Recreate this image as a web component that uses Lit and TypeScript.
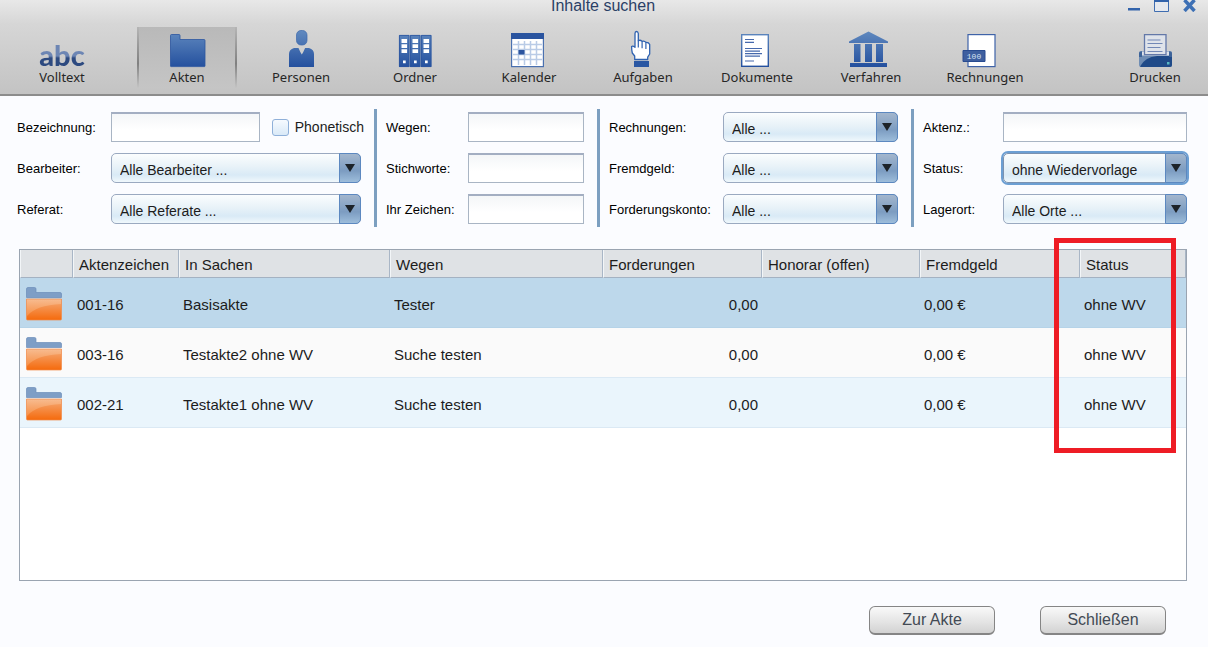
import { LitElement, html, css, svg } from "lit";
import { customElement } from "lit/decorators.js";
import { classMap } from "lit/directives/class-map.js";

const defs = svg`<defs>
  <linearGradient id="g" x1="0" y1="4" x2="0" y2="40" gradientUnits="userSpaceOnUse">
    <stop offset="0" stop-color="#6089bf"/><stop offset="1" stop-color="#24509e"/>
  </linearGradient>
</defs>`;

const icons: Record<string, unknown> = {
  Akten: svg`<path fill="url(#g)" stroke="#2c569f" stroke-width=".8" d="M3.5 8.5q0-1 1-1h7.500q1 0 1 1v4H37q1 0 1 1V39q0 .6-.6.6H4.100q-.6 0-.6-.6z"/>`,
  Personen: svg`<rect x="15.500" y="3.500" width="10.500" height="14.500" rx="4.500" fill="url(#g)" stroke="#3c68ac" stroke-width=".7"/>
    <path fill="url(#g)" d="M8 40V27q0-4.500 5-6h4.500l1.800 4 1.500 2.600 1.500-2.600 1.800-4H28q5 1.500 5 6v13z"/>`,
  Ordner: svg`${[4, 15, 26].map((x) => svg`<rect x=${x} y="8" width="10.400" height="32" fill="url(#g)"/>
    <path fill="none" stroke="#2c569f" stroke-width=".8" d="M${x + 0.4} 8.400h9.600v31.200h-9.600z"/>
    <path fill="#fff" d="M${x + 2.500} 12h5.600v4h-5.600zM${x + 2.500} 17.300h5.600v3.700h-5.600zM${x + 2.500} 22.300h5.600V26h-5.600zM${x + 4} 33.500h2.700v2.700h-2.700z"/>`)}`,
  Kalender: svg`<rect x="2.600" y="6.600" width="31.800" height="33" fill="#fff" stroke="#4a71b0" stroke-width="1.200"/>
    <path fill="#2a549f" d="M2 6h33v6H2z"/>
    <path stroke="#b9cbe6" stroke-width="1.500" d="M4 17.500h29M4 22.500h29M4 27.500h29M4 32.500h29M9.500 14v24M15.500 14v24M21.500 14v24M27.500 14v24"/>
    <path fill="#2a549f" d="M9.500 23h6v4.500h-6z"/>`,
  Aufgaben: svg`<path fill="#fff" stroke="#2f62b0" stroke-width="1.300" stroke-linejoin="round" d="M11.700 32.500V29L9.300 26q-.7-3.500-.7-6.500 1.200-1 3.400.8V6.500Q12 4.500 13.500 4.500T15.300 6.500v7.300q1.900-1.300 3.800.6 2.200-1 3.800 1 2.800-.2 3.800 2V27l-2 3.200v2.300z"/>
    <path stroke="#2f62b0" stroke-width="1.200" d="M15.300 13.500v7M19.100 14.400v6.800M22.900 15.400v6.500"/>
    <path fill="#2a57a3" d="M11 34h15v6H11z"/>`,
  Dokumente: svg`<rect x="4.700" y="7.700" width="26.600" height="31.600" fill="#fff" stroke="url(#g)" stroke-width="1.400"/>
    <path stroke="#4669ac" stroke-width="1.200" d="M8 12.500h9M8 15.300h9M8 21.500h17M8 24.200h15M8 26.700h17M8 29.200h15M8 34h9"/>`,
  Verfahren: svg`<path fill="url(#g)" d="M17.500 4.500 37 14.500V16H-2v-1.500zM3 17h6.500v18H3zM14 17h7v18h-7zM25 17h7v18h-7zM-1 36h37v4H-1z"/>`,
  Rechnungen: svg`<rect x="3" y="7.600" width="27" height="32" fill="#fff" stroke="#3f63a8" stroke-width="1.200"/>
    <path fill="#3e5f9f" stroke="#284b90" d="M-2 23.500h22v11H-2z"/>
    <text x="9" y="32" text-anchor="middle" font-family="Liberation Mono, monospace" font-size="8" fill="#d8e2f2">100</text>`,
  Drucken: svg`<path fill="#6f8db4" d="M4 26q0-2 2-2h29q2 0 2 2v12q0 2-2 2H6q-2 0-2-2z"/>
    <path fill="#dfe3ea" d="M7 24.500h27v4H7z"/>
    <path fill="#1f4a88" d="M5 39.500Q10 30 22 29H37v9q0 2-2 2H6z"/>
    <path fill="#3d6399" d="M34 24.500h1q2 0 2 2V30h-3zM4 26.500q0-2 2-2h1V30H4z"/>
    <path fill="#dfe3ea" stroke="#6378a8" stroke-width="1.300" d="M9.500 7.600h21.500v20H9.500z"/>
    <path stroke="#7288b6" stroke-width="1.200" d="M12.500 13h13M12.500 16.500h15M12.500 20.500h13M12.500 24.500h15"/>
    <path fill="#57b7c4" d="M32 35h2.500v2.500H32z"/>`,
};

const folder = html`<svg class="folder" viewBox="0 0 36 34" aria-hidden="true">
  <defs>
    <linearGradient id="o" x1="0" y1="0" x2="0" y2="1"><stop offset="0" stop-color="#f5ab78"/><stop offset="1" stop-color="#f56a0c"/></linearGradient>
    <linearGradient id="s" x1="0" y1="0" x2="0" y2="1"><stop offset="0" stop-color="#f9c49c"/><stop offset="1" stop-color="#f79a55"/></linearGradient>
  </defs>
  <path fill="#7e9ec6" stroke="#6b8db9" stroke-width=".7" d="M.5 2q0-1.500 1.500-1.500h6.500q1.500 0 1.500 1.500v3.500h24q1.500 0 1.500 1.500v3.500H.5z"/>
  <path fill="url(#o)" stroke="#f08a48" stroke-width=".7" d="M.5 12h35v20q0 1-1 1h-33q-1 0-1-1z"/>
  <path fill="url(#s)" opacity=".65" d="M1 12.500h34V17Q10 18 1 29z"/>
</svg>`;

type Field = { label: string; id: string; value?: string; check?: string; focus?: boolean };

const groups: Field[][] = [
  [
    { label: "Bezeichnung:", id: "bezeichnung", check: "Phonetisch" },
    { label: "Bearbeiter:", id: "bearbeiter", value: "Alle Bearbeiter ..." },
    { label: "Referat:", id: "referat", value: "Alle Referate ..." },
  ],
  [
    { label: "Wegen:", id: "wegen" },
    { label: "Stichworte:", id: "stichworte" },
    { label: "Ihr Zeichen:", id: "zeichen" },
  ],
  [
    { label: "Rechnungen:", id: "rechnungen", value: "Alle ..." },
    { label: "Fremdgeld:", id: "fremdgeld", value: "Alle ..." },
    { label: "Forderungskonto:", id: "forderungskonto", value: "Alle ..." },
  ],
  [
    { label: "Aktenz.:", id: "aktenz" },
    { label: "Status:", id: "status", value: "ohne Wiedervorlage", focus: true },
    { label: "Lagerort:", id: "lagerort", value: "Alle Orte ..." },
  ],
];

const columns = ["", "Aktenzeichen", "In Sachen", "Wegen", "Forderungen", "Honorar (offen)", "Fremdgeld", "Status"];
const rows = [
  ["001-16", "Basisakte", "Tester", "0,00", "", "0,00 €", "ohne WV"],
  ["003-16", "Testakte2 ohne WV", "Suche testen", "0,00", "", "0,00 €", "ohne WV"],
  ["002-21", "Testakte1 ohne WV", "Suche testen", "0,00", "", "0,00 €", "ohne WV"],
];

@customElement("app-root")
export class AppRoot extends LitElement {
  static styles = css`
    :host {
      display: flex;
      flex-direction: column;
      min-height: 100vh;
      box-sizing: border-box;
      background: #fbfcff;
      color: #1c1c1c;
      font-family: "Liberation Sans", Arial, sans-serif;
      font-size: 15px;
    }
    *, *::before, *::after { box-sizing: border-box; }
    button, input, select { font: inherit; color: inherit; margin: 0; }
    header {
      border-bottom: 2px solid #8c8c8c;
      background: linear-gradient(#e8e8e8, #d6d6d6 24px, #c3c3c3);
      padding-bottom: 6px;
    }
    .titlebar {
      display: grid;
      grid-template-columns: 1fr auto 1fr;
      padding: 0 10px 0 8px;
      height: 12px;
      margin-bottom: 15px;
    }
    h1 {
      grid-column: 2;
      margin: 0;
      font-size: 16px;
      line-height: 12px;
      font-weight: 400;
      color: #2b3f66;
    }
    .window { display: flex; justify-content: flex-end; gap: 12px; }
    .window button { border: 0; padding: 0; background: none; width: 16px; height: 12px; }
    .window svg { display: block; width: 16px; height: 12px; }
    .toolbar { display: flex; gap: 14px; padding: 0 3px 0 12px; }
    .tool {
      width: 100px;
      height: 61px;
      border: 0;
      padding: 0;
      background: none;
      display: flex;
      flex-direction: column;
      align-items: center;
      font-family: "Noto Sans", sans-serif;
      font-size: 13px;
      line-height: 20px;
      color: #262626;
    }
    .tool svg { width: 40px; height: 40px; overflow: visible; flex: none; }
    .tool.first { margin-right: 11px; }
    .tool.last { margin-left: auto; }
    .tool.active {
      background:
        linear-gradient(#b5b5b5, #808080 60%, #c4c4c4) left / 2px 100% no-repeat,
        linear-gradient(#b5b5b5, #808080 60%, #c4c4c4) right / 2px 100% no-repeat,
        linear-gradient(#b9b9b9, #c5c5c5);
    }
    .abc {
      height: 40px;
      font-family: Lato, sans-serif;
      font-weight: 900;
      font-size: 29px;
      line-height: 56px;
      background: linear-gradient(#6d86b4 29px, #2d4a80 31px);
      -webkit-background-clip: text;
      background-clip: text;
      color: transparent;
    }
    .filters {
      display: grid;
      grid-template-columns: 357fr 223fr 314fr 276fr;
      padding: 13px 21px 0 17px;
    }
    .group {
      display: grid;
      grid-template-columns: 82px minmax(0, 1fr);
      grid-auto-rows: 30px;
      row-gap: 11px;
      align-items: center;
      padding: 3px 13px 3px 9px;
      border-left: 3px solid #7c9fc0;
      font-size: 14px;
    }
    .group:nth-child(1) { grid-template-columns: 94px minmax(0, 1fr); padding-left: 0; border-left: 0; }
    .group:nth-child(3) { grid-template-columns: 114px minmax(0, 1fr); }
    .group:nth-child(4) { grid-template-columns: 80px minmax(0, 1fr); padding-right: 0; }
    .name { padding-top: 1px; font-size: 13px; white-space: nowrap; color: #000; }
    .text {
      width: 100%;
      height: 30px;
      border: 1px solid #a9b5c4;
      border-top: 2px solid #a3aec2;
      border-radius: 0;
      padding: 0 6px;
      background: linear-gradient(#f4f6f8, #fff 60%);
      outline: 0;
    }
    .with-check { display: flex; align-items: center; margin-right: -3px; }
    .with-check .text { flex: 1; min-width: 0; margin-right: 12px; }
    .with-check label { white-space: nowrap; }
    .check {
      appearance: none;
      flex: none;
      width: 17px;
      height: 17px;
      margin-right: 6px;
      border: 1px solid #8fb0d9;
      border-radius: 3px;
      background: linear-gradient(#f6faff, #d9e9f7);
    }
    .pick { position: relative; }
    .pick select {
      appearance: none;
      display: block;
      width: 100%;
      height: 30px;
      padding: 3px 26px 0 8px;
      border: 1px solid #9aa9c0;
      border-radius: 5px;
      background: linear-gradient(#fbfdfe, #e8f2f8 45%, #d9eaf6 75%, #f0f8fc);
      outline: 0;
    }
    .pick::before {
      content: "";
      position: absolute;
      inset: 0 0 0 auto;
      width: 22px;
      border: 1px solid #5c88c0;
      border-radius: 0 5px 5px 0;
      background: linear-gradient(#a3b6cd, #7c9cc1 60%, #9dbddb);
      pointer-events: none;
    }
    .pick::after {
      content: "";
      position: absolute;
      right: 6px;
      top: 11px;
      border: 5px solid transparent;
      border-top: 8px solid #1d2329;
      border-bottom: 0;
      pointer-events: none;
    }
    .pick.focus select { box-shadow: 0 0 0 2px #6c9fd3; border-color: #7b92b0; }
    .frame {
      position: relative;
      flex: 1;
      margin: 22px 21px 0 19px;
      border: 1px solid #9aa4b1;
      background: #fff;
    }
    table { width: 100%; border-collapse: separate; border-spacing: 0; table-layout: fixed; }
    .c0 { width: 53px; } .c1 { width: 106px; } .c2 { width: 211px; } .c3 { width: 213px; }
    .c4 { width: 159px; } .c5 { width: 158px; } .c6 { width: 160px; } .c7 { width: 106px; }
    th {
      height: 28px;
      padding: 1px 0 0 5px;
      text-align: left;
      font-weight: 400;
      white-space: nowrap;
      background: #dfe2e5;
      border-right: 1px solid #a9b6c6;
      border-left: 1px solid #f3f6f8;
      border-bottom: 1px solid #a4b2c2;
    }
    td { height: 50px; padding: 4px 4px 0; white-space: nowrap; border-bottom: 1px solid #dbe9f4; background: #fafafa; }
    td:first-child { padding: 2px 0 0 6px; }
    td:nth-child(5) { text-align: right; }
    tr.even td { background: #eaf5fc; }
    tr.selected td { background: #bdd8eb; border-bottom-color: #b5d3e8; }
    .folder { display: block; width: 36px; height: 34px; }
    .mark {
      position: absolute;
      top: -12px;
      right: 10px;
      width: 122px;
      height: 215px;
      border: 5px solid #ee1c25;
      pointer-events: none;
    }
    footer { display: flex; justify-content: flex-end; gap: 45px; padding: 25px 42px 12px; }
    .action {
      min-width: 126px;
      height: 29px;
      border: 1px solid #858585;
      border-bottom: 2px solid #858585;
      border-radius: 6px;
      padding: 0 12px;
      background: linear-gradient(#f9f9f9, #e3e3e3 60%, #d2d2d2);
      font-size: 16px;
      color: #434a54;
    }
  `;

  private tool(name: string, extra = {}) {
    return html`<button class=${classMap({ tool: true, ...extra })}>
      <svg viewBox="0 0 40 40" aria-hidden="true">${defs}${icons[name]}</svg>${name}
    </button>`;
  }

  private field(f: Field) {
    const label = html`<label class="name" for=${f.id}>${f.label}</label>`;
    if (f.value)
      return html`${label}
        <div class=${classMap({ pick: true, focus: !!f.focus })}>
          <select id=${f.id}><option>${f.value}</option></select>
        </div>`;
    const input = html`<input class="text" id=${f.id} type="text" />`;
    if (f.check)
      return html`${label}
        <div class="with-check">
          ${input}<input class="check" type="checkbox" id="phonetisch" /><label for="phonetisch">${f.check}</label>
        </div>`;
    return html`${label}${input}`;
  }

  render() {
    return html`
      <header>
        <div class="titlebar">
          <h1>Inhalte suchen</h1>
          <div class="window">
            <button aria-label="Minimieren"><svg viewBox="0 0 16 12"><path fill="#3263ab" d="M2 8h12v2.500H2z"/></svg></button>
            <button aria-label="Maximieren"><svg viewBox="0 0 16 12"><path fill="#e6e9ee" stroke="#3f6db0" d="M.5-1h14v12.500H.5z"/><path fill="#3263ab" d="M0 0h15v2H0z"/></svg></button>
            <button aria-label="Fenster schließen"><svg viewBox="0 0 16 12"><path stroke="#3d70b5" stroke-width="3.500" d="m2.500 0 10 11M12.500 0l-10 11"/></svg></button>
          </div>
        </div>
        <nav class="toolbar">
          <button class="tool first"><span class="abc" aria-hidden="true">abc</span>Volltext</button>
          ${this.tool("Akten", { active: true })}
          ${["Personen", "Ordner", "Kalender", "Aufgaben", "Dokumente", "Verfahren", "Rechnungen"].map((n) => this.tool(n))}
          ${this.tool("Drucken", { last: true })}
        </nav>
      </header>
      <form class="filters">
        ${groups.map((g) => html`<div class="group">${g.map((f) => this.field(f))}</div>`)}
      </form>
      <div class="frame">
        <table>
          <colgroup>${columns.map((_, i) => html`<col class="c${i}" />`)}</colgroup>
          <thead><tr>${columns.map((c) => html`<th scope="col">${c}</th>`)}</tr></thead>
          <tbody>
            ${rows.map((r, i) => html`<tr class=${classMap({ selected: i === 0, even: i === 2 })}>
              <td>${folder}</td>${r.map((c) => html`<td>${c}</td>`)}
            </tr>`)}
          </tbody>
        </table>
        <div class="mark"></div>
      </div>
      <footer>
        <button class="action">Zur Akte</button>
        <button class="action">Schließen</button>
      </footer>
    `;
  }
}
